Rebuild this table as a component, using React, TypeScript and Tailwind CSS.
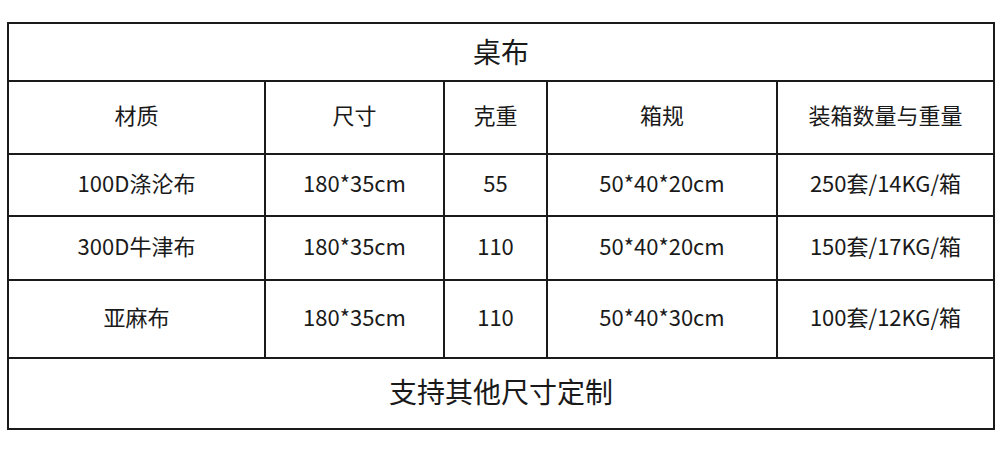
const headers = ["材质", "尺寸", "克重", "箱规", "装箱数量与重量"];

const rows = [
  { h: "h-[60px]", cells: ["100D涤沦布", "180*35cm", "55", "50*40*20cm", "250套/14KG/箱"] },
  { h: "h-[62px]", cells: ["300D牛津布", "180*35cm", "110", "50*40*20cm", "150套/17KG/箱"] },
  { h: "h-[76px]", cells: ["亚麻布", "180*35cm", "110", "50*40*30cm", "100套/12KG/箱"] },
];

function Cell({ children, className = "" }: { children: React.ReactNode; className?: string }) {
  return (
    <div className={`bg-white flex items-center justify-center text-[#1a1a1a] ${className}`}>
      {children}
    </div>
  );
}

export default function App() {
  return (
    <div
      className="w-[1001px] h-[454px] bg-white pt-[22px] pl-[7px]"
      style={{ fontFamily: '"Noto Sans CJK SC", "Noto Sans", sans-serif' }}
    >
      <div className="w-[988px] grid grid-cols-[255px_177px_101px_228px_215px] gap-[2px] p-[2px] bg-[#1a1a1a]">
        <Cell className="col-span-5 h-[56px] text-[28px] pb-[2px]">桌布</Cell>

        {headers.map((t) => (
          <Cell key={t} className="h-[71px] text-[22px] pb-[6px]">
            {t}
          </Cell>
        ))}

        {rows.map((r) =>
          r.cells.map((c, i) => (
            <Cell key={r.cells[0] + i} className={`${r.h} text-[22px] pb-[6px]`}>
              {c}
            </Cell>
          ))
        )}

        <Cell className="col-span-5 h-[69px] text-[28px] pb-[6px]">支持其他尺寸定制</Cell>
      </div>
    </div>
  );
}
